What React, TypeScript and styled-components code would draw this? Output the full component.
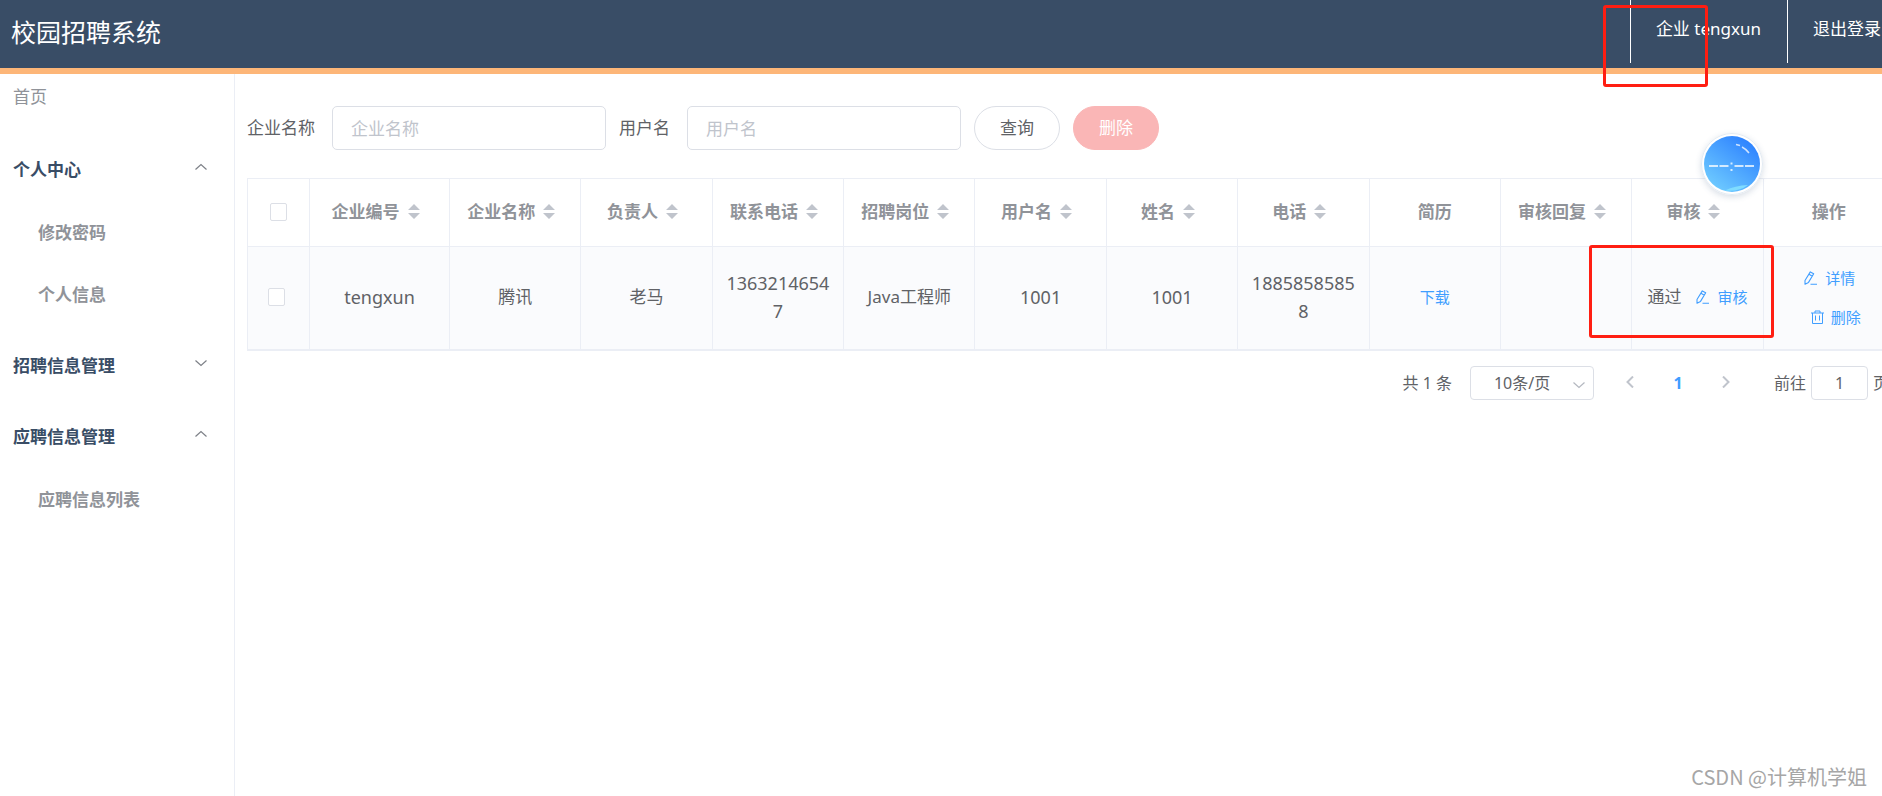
import React from 'react';
import styled, { createGlobalStyle } from 'styled-components';

const GlobalStyle = createGlobalStyle`
  *, *::before, *::after { box-sizing: border-box; }
  html, body { margin: 0; }
  body {
    overflow: hidden;
    background: #fff;
    color: #606266;
    font-family: "Noto Sans", "Noto Sans CJK SC", sans-serif;
    font-size: 17px;
    line-height: 28px;
  }
  button, input, select { font: inherit; color: inherit; margin: 0; }
  button { background: none; border: 0; padding: 0; cursor: pointer; }
  a { color: inherit; text-decoration: none; }
  svg { display: block; flex: none; }
`;

const Shell = styled.div`
  position: relative;
  display: flex;
  flex-direction: column;
  width: calc(100% + 25px);
  min-height: 100vh;
`;

const Header = styled.header`
  display: flex;
  justify-content: space-between;
  align-items: flex-start;
  height: 74px;
  background: #394d66;
  border-bottom: 6px solid #fdb678;
  color: #fff;
`;

const Title = styled.h1`
  margin: 0;
  padding-left: 11px;
  font-size: 25px;
  font-weight: 400;
  line-height: 64px;
`;

const HeaderNav = styled.nav`
  display: flex;
`;

const HeaderItem = styled.a`
  height: 63px;
  padding: 0 26px 0 25px;
  border-left: 1px solid #fff;
  line-height: 58px;
`;

const Body = styled.div`
  display: flex;
  flex: 1;
`;

const Sidebar = styled.nav`
  flex: none;
  width: 235px;
  border-right: 1px solid #ebeef5;
  padding: 8px 27px 0 13px;
`;

const HomeLink = styled.a`
  display: block;
  margin-bottom: 2px;
  color: #909399;
  line-height: 30px;
`;

const MenuGroup = styled.section`
  padding-top: 41px;
`;

const GroupButton = styled.button`
  display: flex;
  justify-content: space-between;
  align-items: flex-start;
  width: 100%;
  color: #394d66;
  font-weight: 700;
  line-height: 30px;
  svg { margin-top: 6px; }
`;

const MenuList = styled.ul`
  list-style: none;
  margin: 0;
  padding: 33px 0 0 25px;
  display: grid;
  gap: 32px;
`;

const MenuLink = styled.a`
  display: block;
  color: #909399;
  font-weight: 700;
  line-height: 30px;
`;

const Main = styled.main`
  flex: 1;
  min-width: 0;
  padding: 32px 12px 0;
`;

const SearchForm = styled.form`
  display: flex;
  align-items: center;
  gap: 13px;
  margin-bottom: 28px;
`;

const Field = styled.label`
  display: flex;
  align-items: center;
  gap: 17px;
`;

const TextInput = styled.input`
  width: 274px;
  height: 44px;
  padding: 0 18px;
  border: 1px solid #dcdfe6;
  border-radius: 5px;
  background: #fff;
  outline: none;
  &::placeholder { color: #c0c4cc; opacity: 1; }
`;

const PillButton = styled.button<{ $danger?: boolean }>`
  width: 86px;
  height: 44px;
  border: 1px solid ${(p) => (p.$danger ? '#fab6b6' : '#dcdfe6')};
  border-radius: 22px;
  background: ${(p) => (p.$danger ? '#fab6b6' : '#fff')};
  color: ${(p) => (p.$danger ? '#fff' : '#606266')};
`;

const Table = styled.table`
  width: 100%;
  table-layout: fixed;
  border-collapse: separate;
  border-spacing: 0;
  border-top: 1px solid #ebeef5;
  border-left: 1px solid #ebeef5;
  text-align: center;
`;

const Col = styled.col<{ $w?: number }>`
  ${(p) => (p.$w ? `width: ${p.$w}px;` : '')}
`;

const Th = styled.th`
  height: 68px;
  padding: 0 0 2px;
  border-right: 1px solid #ebeef5;
  border-bottom: 1px solid #ebeef5;
  color: #909399;
  font-weight: 700;
`;

const Td = styled.td<{ $latin?: boolean }>`
  height: 104px;
  padding: 0 12px 2px;
  border-right: 1px solid #ebeef5;
  border-bottom: 2px solid #ebeef5;
  background: #fafbfd;
  font-size: ${(p) => (p.$latin ? 18 : 17)}px;
  word-break: break-all;
`;

const HeadLabel = styled.span`
  display: flex;
  justify-content: center;
  align-items: center;
`;

const SortButton = styled.button`
  display: flex;
  justify-content: center;
  width: 28px;
`;

const Check = styled.input`
  display: block;
  appearance: none;
  width: 17px;
  height: 18px;
  margin: 0 auto;
  border: 1px solid #dcdfe6;
  border-radius: 2px;
  background: #fff;
`;

const CheckCell = styled.div<{ $inset: number }>`
  padding-right: ${(p) => p.$inset}px;
`;

const LinkButton = styled.button`
  display: flex;
  align-items: center;
  gap: 8px;
  color: #409eff;
  font-size: 15px;
  line-height: 28px;
`;

const AuditCell = styled.div`
  display: flex;
  justify-content: center;
  align-items: center;
  gap: 15px;
`;

const Actions = styled.div`
  display: grid;
  justify-items: center;
  gap: 11px;
  padding-left: 2px;
  button + button { gap: 7px; margin-left: 12px; }
`;

const Download = styled.a`
  color: #409eff;
  font-size: 15px;
`;

const Pagination = styled.nav`
  display: flex;
  justify-content: flex-end;
  align-items: center;
  margin-top: 15px;
  padding-right: 6px;
  font-size: 16px;
`;

const SelectWrap = styled.label`
  position: relative;
  margin: 0 20px 0 18px;
  svg { position: absolute; right: 9px; top: 13px; pointer-events: none; }
`;

const PageSize = styled.select`
  display: block;
  appearance: none;
  width: 124px;
  height: 34px;
  padding: 0 23px;
  border: 1px solid #dcdfe6;
  border-radius: 4px;
  background: #fff;
`;

const PagerButton = styled.button<{ $active?: boolean }>`
  display: flex;
  justify-content: center;
  align-items: center;
  width: 32px;
  height: 32px;
  margin-right: 16px;
  color: ${(p) => (p.$active ? '#409eff' : '#c0c4cc')};
  font-weight: 700;
  svg { margin-bottom: 3px; }
`;

const Jump = styled.label`
  display: flex;
  align-items: center;
  gap: 5px;
  margin-left: 16px;
`;

const JumpInput = styled.input`
  width: 57px;
  height: 34px;
  border: 1px solid #dcdfe6;
  border-radius: 4px;
  text-align: center;
`;

const Marker = styled.div<{ $top: number; $right: number; $w: number; $h: number }>`
  position: absolute;
  top: ${(p) => p.$top}px;
  right: ${(p) => p.$right}px;
  width: ${(p) => p.$w}px;
  height: ${(p) => p.$h}px;
  border: 3px solid #ff1e12;
  border-radius: 3px;
  pointer-events: none;
`;

const FloatingClock = styled.div`
  position: absolute;
  top: 133px;
  right: 144px;
  border-radius: 50%;
  box-shadow: 0 2px 6px rgba(60, 90, 130, 0.2);
`;

const Watermark = styled.div`
  position: absolute;
  right: 40px;
  bottom: 4px;
  color: #a6a6a6;
  font-family: "Noto Sans CJK SC", sans-serif;
  font-size: 20px;
  line-height: 30px;
`;

const Chevron = ({ up, color = '#7d8087' }: { up?: boolean; color?: string }) => (
  <svg width="12" height="12" viewBox="0 0 12 12" fill="none" stroke={color} strokeWidth="1.2">
    <path d={up ? 'M0.5 8.5 6 3.5l5.500 5' : 'M0.5 3.5 6 8.5l5.500-5'} />
  </svg>
);

const SortIcon = () => (
  <svg width="12" height="15" viewBox="0 0 12 15" fill="#c0c4cc">
    <path d="M6 0l6 6H0zM0 9h12l-6 6z" />
  </svg>
);

const EditIcon = () => (
  <svg width="13" height="14" viewBox="0 0 13 14" fill="none" stroke="#409eff" strokeWidth="1.1" strokeLinejoin="round">
    <path d="M6.300 .9 9.700 2.800 4.500 11.400 1 13.200 1 9.500zM5 3.200l3.300 2M6.500 13.200H13" />
  </svg>
);

const TrashIcon = () => (
  <svg width="13" height="14" viewBox="0 0 13 14" fill="none" stroke="#409eff" strokeWidth="1">
    <path d="M0 3h13M4 3V1h5v2M1.5 3v10.500h10V3M4.500 5.500v5M8.500 5.500v5" />
  </svg>
);

const Arrow = ({ left }: { left?: boolean }) => (
  <svg width="8" height="12" viewBox="0 0 8 12" fill="none" stroke="#c0c4cc" strokeWidth="2">
    <path d={left ? 'M7 .5 1.500 6 7 11.500' : 'M1 .5 6.500 6 1 11.500'} />
  </svg>
);

const ClockFace = () => (
  <svg width="62" height="62" viewBox="0 0 62 62">
    <defs>
      <linearGradient id="face" x1="0.2" y1="0.9" x2="0.8" y2="0.1">
        <stop offset="0" stopColor="#6cc8ff" />
        <stop offset="1" stopColor="#2f84ff" />
      </linearGradient>
    </defs>
    <circle cx="31" cy="31" r="30.5" fill="#fff" stroke="#e3ebf3" />
    <circle cx="31" cy="31" r="28" fill="url(#face)" />
    <path d="M24 57.500q10-5 23-5.500-9 7-23 5.500z" fill="#7fdcff" />
    <path d="M35 11.500l4 1M41 14q4 2 7 6" stroke="#cfe4ff" strokeWidth="1.500" fill="none" />
    <path d="M8 33h9M18.500 33h9M33.500 33h9M44 33h9" stroke="#fff" strokeWidth="1.500" />
    <path d="M29.500 29.500h2v2h-2zM29.500 36h2v2h-2z" fill="#d4ecff" />
  </svg>
);

const columns: { label: string; sortable: boolean }[] = [
  { label: '企业编号', sortable: true },
  { label: '企业名称', sortable: true },
  { label: '负责人', sortable: true },
  { label: '联系电话', sortable: true },
  { label: '招聘岗位', sortable: true },
  { label: '用户名', sortable: true },
  { label: '姓名', sortable: true },
  { label: '电话', sortable: true },
  { label: '简历', sortable: false },
  { label: '审核回复', sortable: true },
  { label: '审核', sortable: true },
  { label: '操作', sortable: false },
];

const menu = [
  { label: '个人中心', open: true, items: ['修改密码', '个人信息'] },
  { label: '招聘信息管理', open: false, items: [] },
  { label: '应聘信息管理', open: true, items: ['应聘信息列表'] },
];

const values = ['tengxun', '腾讯', '老马', '13632146547', 'Java工程师', '1001', '1001', '18858585858'];

export default function App() {
  return (
    <>
      <GlobalStyle />
      <Shell>
        <Header>
          <Title>校园招聘系统</Title>
          <HeaderNav>
            <HeaderItem href="#account">企业 tengxun</HeaderItem>
            <HeaderItem href="#logout">退出登录</HeaderItem>
          </HeaderNav>
        </Header>
        <Body>
          <Sidebar>
            <HomeLink href="#home">首页</HomeLink>
            {menu.map((group) => (
              <MenuGroup key={group.label}>
                <GroupButton type="button" aria-expanded={group.open}>
                  {group.label}
                  <Chevron up={group.open} />
                </GroupButton>
                {group.open && (
                  <MenuList>
                    {group.items.map((item) => (
                      <li key={item}><MenuLink href="#menu">{item}</MenuLink></li>
                    ))}
                  </MenuList>
                )}
              </MenuGroup>
            ))}
          </Sidebar>
          <Main>
            <SearchForm>
              <Field>企业名称<TextInput placeholder="企业名称" /></Field>
              <Field>用户名<TextInput placeholder="用户名" /></Field>
              <PillButton type="button">查询</PillButton>
              <PillButton type="button" $danger>删除</PillButton>
            </SearchForm>
            <Table>
              <colgroup>
                <Col $w={62} />
                <Col $w={140} />
                {columns.slice(1).map((c) => <Col key={c.label} />)}
              </colgroup>
              <thead>
                <tr>
                  <Th>
                    <CheckCell $inset={0}><Check type="checkbox" aria-label="全选" /></CheckCell>
                  </Th>
                  {columns.map((c) => (
                    <Th key={c.label}>
                      <HeadLabel>
                        {c.label}
                        {c.sortable && <SortButton type="button" aria-label={c.label}><SortIcon /></SortButton>}
                      </HeadLabel>
                    </Th>
                  ))}
                </tr>
              </thead>
              <tbody>
                <tr>
                  <Td>
                    <CheckCell $inset={4}><Check type="checkbox" aria-label="tengxun" /></CheckCell>
                  </Td>
                  {values.map((v, i) => (
                    <Td key={i} $latin={/^\w+$/.test(v)}>{v}</Td>
                  ))}
                  <Td><Download href="#resume">下载</Download></Td>
                  <Td />
                  <Td>
                    <AuditCell>
                      通过
                      <LinkButton type="button"><EditIcon />审核</LinkButton>
                    </AuditCell>
                  </Td>
                  <Td>
                    <Actions>
                      <LinkButton type="button"><EditIcon />详情</LinkButton>
                      <LinkButton type="button"><TrashIcon />删除</LinkButton>
                    </Actions>
                  </Td>
                </tr>
              </tbody>
            </Table>
            <Pagination>
              <span>共 1 条</span>
              <SelectWrap>
                <PageSize aria-label="10条/页"><option>10条/页</option></PageSize>
                <Chevron color="#b4b8c0" />
              </SelectWrap>
              <PagerButton type="button" aria-label="‹"><Arrow left /></PagerButton>
              <PagerButton type="button" $active>1</PagerButton>
              <PagerButton type="button" aria-label="›"><Arrow /></PagerButton>
              <Jump>前往<JumpInput defaultValue="1" />页</Jump>
            </Pagination>
          </Main>
        </Body>
        <Marker $top={5} $right={199} $w={105} $h={82} />
        <Marker $top={245} $right={133} $w={185} $h={93} />
        <FloatingClock><ClockFace /></FloatingClock>
        <Watermark>CSDN @计算机学姐</Watermark>
      </Shell>
    </>
  );
}
